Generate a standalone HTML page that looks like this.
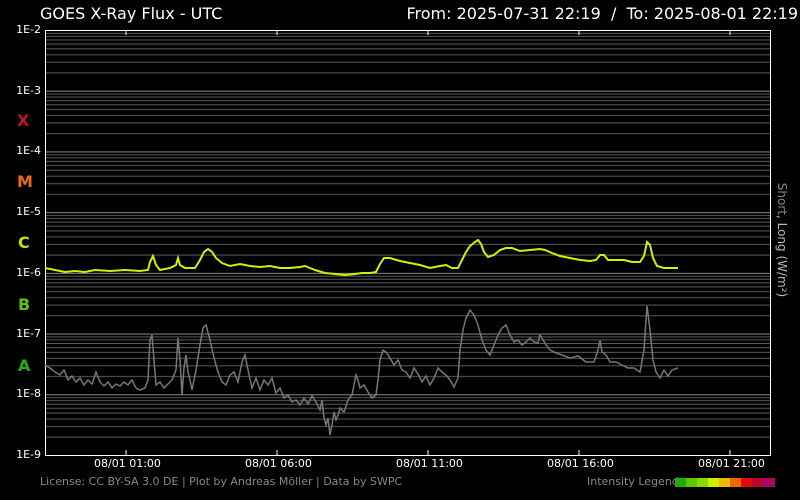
<!DOCTYPE html>
<html><head><meta charset="utf-8"><style>
body{margin:0;background:#000;width:800px;height:500px;overflow:hidden;font-family:"DejaVu Sans","Liberation Sans",sans-serif;}
</style></head><body>
<svg width="800" height="500" xmlns="http://www.w3.org/2000/svg" style="position:absolute;left:0;top:0">
<defs>
<pattern id="g" x="45" y="30" width="725" height="60.714" patternUnits="userSpaceOnUse">
<g stroke="#5a5a5a" stroke-width="1">
<line x1="0" x2="725" y1="0.5" y2="0.5" stroke="#888"/>
<line x1="0" x2="725" y1="3.3" y2="3.3"/>
<line x1="0" x2="725" y1="6.4" y2="6.4"/>
<line x1="0" x2="725" y1="9.9" y2="9.9"/>
<line x1="0" x2="725" y1="14" y2="14"/>
<line x1="0" x2="725" y1="18.8" y2="18.8"/>
<line x1="0" x2="725" y1="24.7" y2="24.7"/>
<line x1="0" x2="725" y1="32.2" y2="32.2"/>
<line x1="0" x2="725" y1="42.9" y2="42.9"/>
</g></pattern></defs>
<rect x="45" y="30" width="725" height="425" fill="url(#g)"/>
<rect x="45.5" y="30.5" width="725" height="425" fill="none" stroke="#fff" stroke-width="1"/>
<g stroke="#fff" stroke-width="1">
<line x1="126" x2="126" y1="30" y2="35"/><line x1="277" x2="277" y1="30" y2="35"/><line x1="428" x2="428" y1="30" y2="35"/><line x1="579" x2="579" y1="30" y2="35"/><line x1="730" x2="730" y1="30" y2="35"/>
<line x1="126" x2="126" y1="450" y2="455"/><line x1="277" x2="277" y1="450" y2="455"/><line x1="428" x2="428" y1="450" y2="455"/><line x1="579" x2="579" y1="450" y2="455"/><line x1="730" x2="730" y1="450" y2="455"/>
</g>
<polyline fill="none" stroke="#777" stroke-width="1.5" points="45,365 50,368 55,372 60,375 64,370 68,380 72,376 76,382 80,378 84,385 88,380 92,384 96,372 100,382 104,386 108,382 112,388 116,384 120,386 124,382 128,385 132,380 136,388 140,390 145,388 148,380 150,340 152,335 154,360 156,385 160,382 164,388 168,384 172,380 176,370 178,338 180,360 182,395 184,368 186,355 188,372 190,380 192,390 196,370 200,345 203,328 206,325 210,340 214,358 218,372 222,382 226,385 230,375 234,372 238,382 242,362 245,355 248,370 252,388 256,378 260,390 264,380 268,385 272,378 276,393 280,388 284,398 288,395 292,402 296,400 300,405 304,398 308,404 312,396 316,402 320,410 322,400 324,418 326,425 328,418 330,435 332,425 334,412 336,420 338,415 340,408 344,412 348,400 352,395 354,385 356,375 358,380 360,388 364,385 368,392 372,398 376,395 378,380 380,360 383,350 386,352 390,358 394,365 398,360 402,370 406,372 410,378 414,368 418,374 422,382 426,376 430,385 434,378 438,368 442,372 446,375 450,380 454,387 458,378 460,350 463,330 466,318 470,310 474,315 478,325 482,340 486,350 490,355 494,345 498,335 502,328 506,325 510,335 514,342 518,340 522,345 526,342 530,338 534,342 538,343 540,335 542,338 546,345 550,350 556,353 562,355 570,358 578,356 586,362 594,362 598,350 600,340 602,352 606,355 610,362 616,362 622,365 628,368 634,368 640,372 644,350 647,306 650,330 653,360 656,372 660,378 664,370 668,376 672,370 678,368"/>
<polyline fill="none" stroke="#d4f000" stroke-width="2" points="45,268 55,270 65,272 75,271 85,272 95,270 110,271 125,270 140,271 148,270 150,262 153,256 156,265 160,270 170,268 176,265 178,258 180,265 185,268 195,268 200,260 204,252 208,249 212,252 216,258 222,263 230,266 240,264 250,266 260,267 270,266 280,268 290,268 300,267 305,266 315,270 325,273 335,274 345,275 355,274 362,273 370,273 376,272 380,264 384,258 390,258 400,261 410,263 420,265 430,268 440,266 446,265 452,268 458,268 462,260 466,252 470,246 475,242 478,240 481,244 484,252 488,257 494,255 500,250 506,248 512,248 520,251 530,250 540,249 545,250 552,253 560,256 570,258 580,260 590,261 596,260 600,255 604,255 608,260 616,260 624,260 632,262 640,262 644,256 647,242 650,245 653,258 657,266 664,268 672,268 678,268"/>
<text x="778" y="240" fill="#bbb" font-size="12" text-anchor="middle" transform="rotate(90 778 240)" font-family="DejaVu Sans,sans-serif"><tspan fill="#888">Short</tspan>, Long (W/m²)</text>
</svg>
<div style="position:absolute;left:40px;top:4px;color:#fff;font-size:16px;">GOES X-Ray Flux - UTC</div>
<div style="position:absolute;right:2px;top:4px;color:#fff;font-size:16px;white-space:nowrap">From: 2025-07-31 22:19 &nbsp;/&nbsp; To: 2025-08-01 22:19</div>
<div style="position:absolute;left:0;top:0;width:41px;color:#fff;font-size:11px;text-align:right;line-height:13px">
<div style="position:absolute;right:0;top:23px">1E-2</div>
<div style="position:absolute;right:0;top:84px">1E-3</div>
<div style="position:absolute;right:0;top:144px">1E-4</div>
<div style="position:absolute;right:0;top:205px">1E-5</div>
<div style="position:absolute;right:0;top:266px">1E-6</div>
<div style="position:absolute;right:0;top:327px">1E-7</div>
<div style="position:absolute;right:0;top:387px">1E-8</div>
<div style="position:absolute;right:0;top:448px">1E-9</div>
</div>
<div style="position:absolute;left:17px;top:111px;color:#c0102a;font-size:16px;font-weight:bold">X</div>
<div style="position:absolute;left:17px;top:172px;color:#ec6a0c;font-size:16px;font-weight:bold">M</div>
<div style="position:absolute;left:18px;top:233px;color:#cce000;font-size:16px;font-weight:bold">C</div>
<div style="position:absolute;left:18px;top:295px;color:#60c010;font-size:16px;font-weight:bold">B</div>
<div style="position:absolute;left:18px;top:356px;color:#20b010;font-size:16px;font-weight:bold">A</div>
<div style="color:#fff;font-size:11px;">
<div style="position:absolute;left:94px;top:457px">08/01 01:00</div>
<div style="position:absolute;left:245px;top:457px">08/01 06:00</div>
<div style="position:absolute;left:396px;top:457px">08/01 11:00</div>
<div style="position:absolute;left:547px;top:457px">08/01 16:00</div>
<div style="position:absolute;left:698px;top:457px">08/01 21:00</div>
</div>
<div style="position:absolute;left:40px;top:475px;color:#888;font-size:11px">License: CC BY-SA 3.0 DE | Plot by Andreas Möller | Data by SWPC</div>
<div style="position:absolute;left:587px;top:475px;color:#888;font-size:11px">Intensity Legend</div>
<div style="position:absolute;left:675px;top:478px;height:9px;display:flex">
<span style="width:11px;background:#20aa10"></span><span style="width:11px;background:#5ac800"></span><span style="width:11px;background:#88d800"></span><span style="width:11px;background:#d0ea00"></span><span style="width:11px;background:#f0b800"></span><span style="width:11px;background:#ee6808"></span><span style="width:11px;background:#e20a0a"></span><span style="width:11px;background:#b8082a"></span><span style="width:12px;background:#a80860"></span>
</div>
</body></html>
